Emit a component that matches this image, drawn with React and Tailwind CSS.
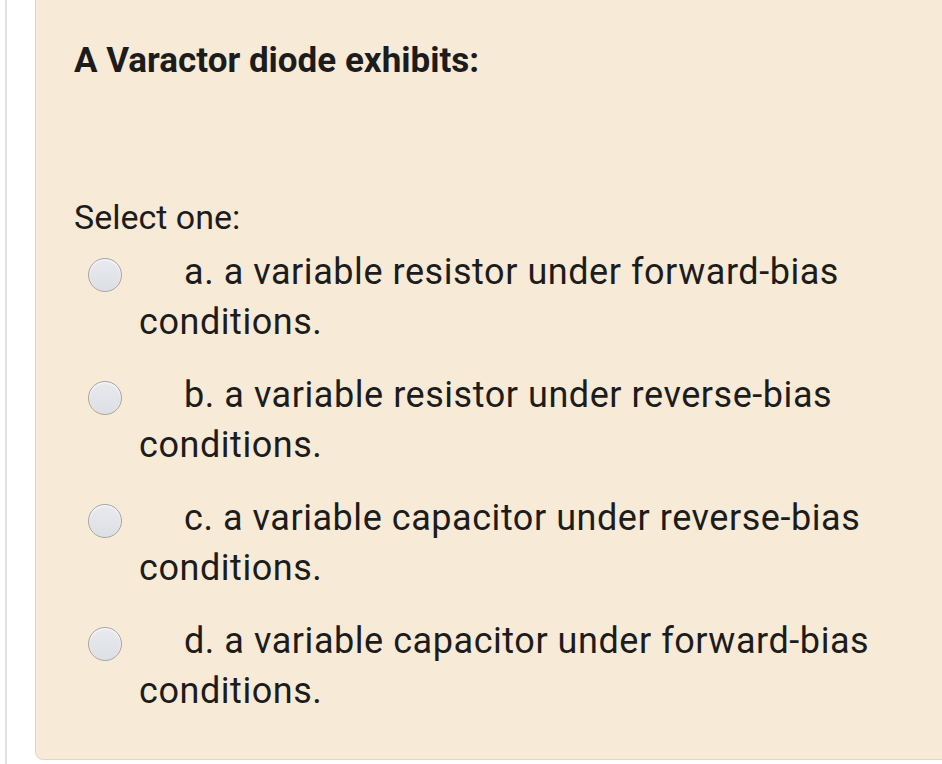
import React from 'react';

const options = [
  'a. a variable resistor under forward-bias',
  'b. a variable resistor under reverse-bias',
  'c. a variable capacitor under reverse-bias',
  'd. a variable capacitor under forward-bias',
];

function Radio() {
  return (
    <span className="inline-block align-middle -ml-[51px] mr-[62px] w-[34px] h-[34px] rounded-full border-[1.5px] border-[#a6a6a6] bg-gradient-to-b from-[#e9eaee] to-[#dcdfe4] shadow-[inset_0_1px_2px_rgba(255,255,255,0.9)] translate-y-[1px]" />
  );
}

export default function App() {
  return (
    <div className="h-[764px] w-[942px] overflow-hidden bg-white flex" style={{ fontFamily: 'Roboto, "Noto Sans", sans-serif' }}>
      <div className="w-[5px] shrink-0" />
      <div className="w-[2px] shrink-0 bg-[#e3e3e3]" />
      <div className="w-[28px] shrink-0" />
      <div className="flex-1 min-w-[920px] h-[761px] -mt-[1px] bg-[#f7ead6] border border-[#e2d7c2] rounded-bl-[8px] pl-[38px] pt-[40px] text-[#1c1c1c]">
        <h1 className="text-[35px] leading-[42px] font-bold">A Varactor diode exhibits:</h1>
        <div className="mt-[115px] text-[34px] leading-[40px]">Select one:</div>
        <div className="mt-[10px]">
          {options.map((o) => (
            <div key={o} className="pl-[65px] mb-[23px] text-[36px] leading-[50px] tracking-[0.55px] whitespace-nowrap">
              <Radio />
              {o}
              <br />
              conditions.
            </div>
          ))}
        </div>
      </div>
    </div>
  );
}
